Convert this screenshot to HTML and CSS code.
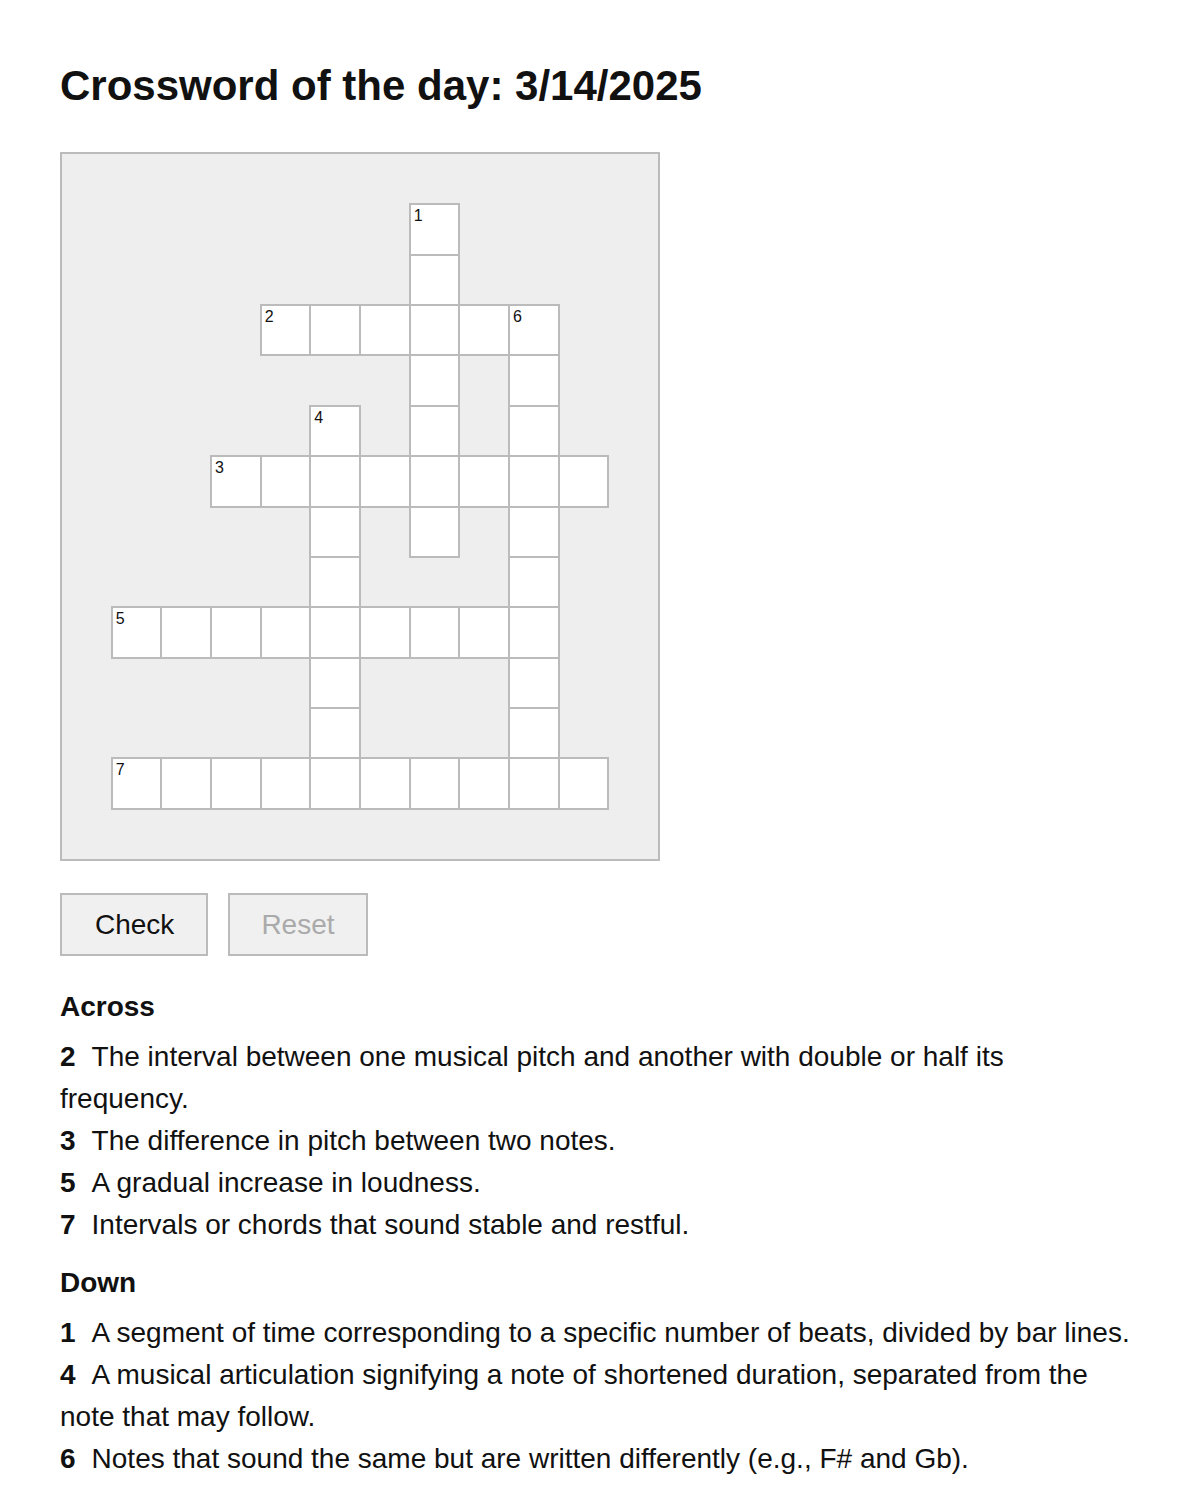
FILE: index.html
```html
<!DOCTYPE html>
<html lang="en">
<head>
<meta charset="utf-8">
<title>Crossword of the day</title>
<link rel="stylesheet" href="styles.css">
</head>
<body>
<main class="page">
  <h1 class="title">Crossword of the day: 3/14/2025</h1>

  <div class="board">
    <!-- 1 down -->
    <div class="cell" style="grid-area: 2 / 8"><span class="num">1</span></div>
    <div class="cell" style="grid-area: 3 / 8"></div>
    <!-- 2 across -->
    <div class="cell" style="grid-area: 4 / 5"><span class="num">2</span></div>
    <div class="cell" style="grid-area: 4 / 6"></div>
    <div class="cell" style="grid-area: 4 / 7"></div>
    <div class="cell" style="grid-area: 4 / 8"></div>
    <div class="cell" style="grid-area: 4 / 9"></div>
    <div class="cell" style="grid-area: 4 / 10"><span class="num">6</span></div>
    <!-- rows between -->
    <div class="cell" style="grid-area: 5 / 8"></div>
    <div class="cell" style="grid-area: 5 / 10"></div>
    <div class="cell" style="grid-area: 6 / 6"><span class="num">4</span></div>
    <div class="cell" style="grid-area: 6 / 8"></div>
    <div class="cell" style="grid-area: 6 / 10"></div>
    <!-- 3 across -->
    <div class="cell" style="grid-area: 7 / 4"><span class="num">3</span></div>
    <div class="cell" style="grid-area: 7 / 5"></div>
    <div class="cell" style="grid-area: 7 / 6"></div>
    <div class="cell" style="grid-area: 7 / 7"></div>
    <div class="cell" style="grid-area: 7 / 8"></div>
    <div class="cell" style="grid-area: 7 / 9"></div>
    <div class="cell" style="grid-area: 7 / 10"></div>
    <div class="cell" style="grid-area: 7 / 11"></div>
    <!-- down tails -->
    <div class="cell" style="grid-area: 8 / 6"></div>
    <div class="cell" style="grid-area: 8 / 8"></div>
    <div class="cell" style="grid-area: 8 / 10"></div>
    <div class="cell" style="grid-area: 9 / 6"></div>
    <div class="cell" style="grid-area: 9 / 10"></div>
    <!-- 5 across -->
    <div class="cell" style="grid-area: 10 / 2"><span class="num">5</span></div>
    <div class="cell" style="grid-area: 10 / 3"></div>
    <div class="cell" style="grid-area: 10 / 4"></div>
    <div class="cell" style="grid-area: 10 / 5"></div>
    <div class="cell" style="grid-area: 10 / 6"></div>
    <div class="cell" style="grid-area: 10 / 7"></div>
    <div class="cell" style="grid-area: 10 / 8"></div>
    <div class="cell" style="grid-area: 10 / 9"></div>
    <div class="cell" style="grid-area: 10 / 10"></div>
    <!-- down tails -->
    <div class="cell" style="grid-area: 11 / 6"></div>
    <div class="cell" style="grid-area: 11 / 10"></div>
    <div class="cell" style="grid-area: 12 / 6"></div>
    <div class="cell" style="grid-area: 12 / 10"></div>
    <!-- 7 across -->
    <div class="cell" style="grid-area: 13 / 2"><span class="num">7</span></div>
    <div class="cell" style="grid-area: 13 / 3"></div>
    <div class="cell" style="grid-area: 13 / 4"></div>
    <div class="cell" style="grid-area: 13 / 5"></div>
    <div class="cell" style="grid-area: 13 / 6"></div>
    <div class="cell" style="grid-area: 13 / 7"></div>
    <div class="cell" style="grid-area: 13 / 8"></div>
    <div class="cell" style="grid-area: 13 / 9"></div>
    <div class="cell" style="grid-area: 13 / 10"></div>
    <div class="cell" style="grid-area: 13 / 11"></div>
  </div>

  <div class="actions">
    <button class="btn btn-check" type="button">Check</button>
    <button class="btn btn-reset" type="button" disabled>Reset</button>
  </div>

  <section class="clues">
    <h2 class="clues-title">Across</h2>
    <ul class="clue-list">
      <li><b class="clue-num">2</b><span>The interval between one musical pitch and another with double or half its frequency.</span></li>
      <li><b class="clue-num">3</b><span>The difference in pitch between two notes.</span></li>
      <li><b class="clue-num">5</b><span>A gradual increase in loudness.</span></li>
      <li><b class="clue-num">7</b><span>Intervals or chords that sound stable and restful.</span></li>
    </ul>
  </section>

  <section class="clues">
    <h2 class="clues-title down">Down</h2>
    <ul class="clue-list">
      <li><b class="clue-num">1</b><span>A segment of time corresponding to a specific number of beats, divided by bar lines.</span></li>
      <li><b class="clue-num">4</b><span>A musical articulation signifying a note of shortened duration, separated from the note that may follow.</span></li>
      <li><b class="clue-num">6</b><span>Notes that sound the same but are written differently (e.g., F# and Gb).</span></li>
    </ul>
  </section>
</main>
</body>
</html>
```

FILE: styles.css
```css
html, body {
  margin: 0;
  padding: 0;
  background: #fff;
}

body {
  font-family: "Liberation Sans", Arial, sans-serif;
  color: #111;
}

.page {
  padding: 62px 60px 40px;
}

.title {
  margin: 0 0 42px;
  font-size: 42px;
  font-weight: 700;
  line-height: normal;
}

/* board: 12 x 14 track grid, one empty track round the word cells */
.board {
  box-sizing: border-box;
  width: 600px;
  height: 709px;
  border: 2px solid #bbb;
  background: #eee;
  display: grid;
  grid-template-columns: repeat(12, 1fr);
  grid-template-rows: repeat(14, 1fr);
}

.cell {
  background: #fff;
  outline: 2px solid #bbb;
  outline-offset: -1px;
  padding: 3px 4px;
  font-size: 16px;
  line-height: normal;
  color: #111;
}

.num {
  display: block;
}

.actions {
  display: flex;
  gap: 20px;
  margin-top: 32px;
}

.btn {
  font-family: "Liberation Sans", Arial, sans-serif;
  font-size: 28px;
  line-height: 31px;
  padding: 14px 32px;
  border: 2px solid #bbb;
  background: #f0f0f0;
  color: #111;
  border-radius: 0;
}

.btn-check {
  padding: 14px 32px 14px 33px;
}

.btn-reset {
  padding: 14px 31px;
}

.btn:disabled {
  color: #aaa;
}

.clues-title {
  margin: 30px 0 8px;
  font-size: 28px;
  font-weight: 700;
  line-height: 42px;
}

.clues-title.down {
  margin-top: 16px;
}

.clue-list {
  list-style: none;
  margin: 0;
  padding: 0;
  font-size: 28px;
  line-height: 42px;
}

.clue-num {
  margin-right: 16px;
}
```
